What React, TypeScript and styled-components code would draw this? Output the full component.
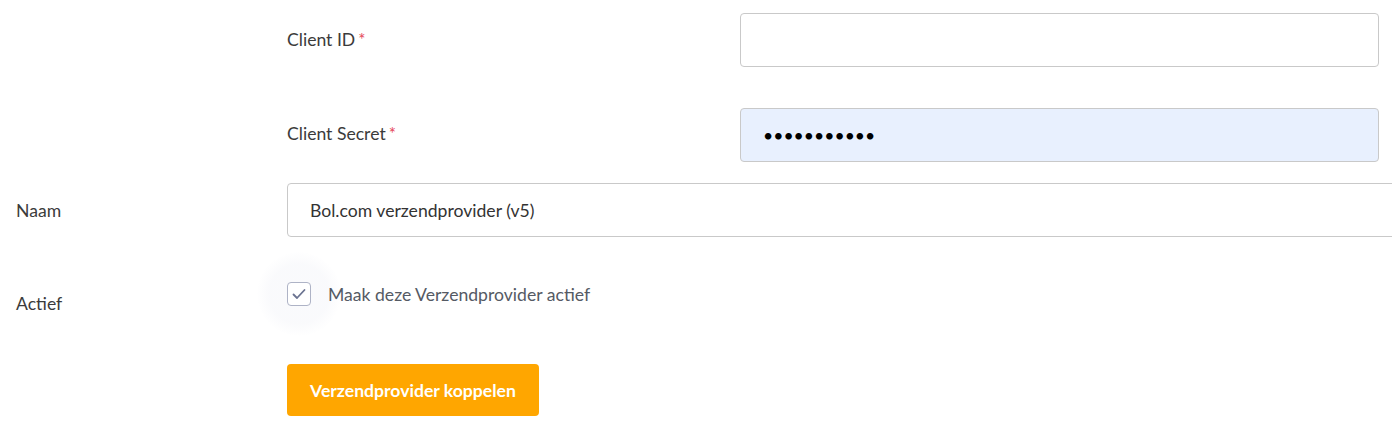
import React from 'react';
import styled, { createGlobalStyle } from 'styled-components';

const Global = createGlobalStyle`
  html, body {
    margin: 0;
    padding: 0;
    background: #fff;
    overflow: hidden;
  }
  body {
    font-family: Lato, 'Open Sans', sans-serif;
    color: #3b3b3b;
  }
`;

const S = {
  Form: styled.form`
    display: flex;
    flex-direction: column;
    width: 1500px;
    padding-top: 13px;
  `,
  Row: styled.div<{ $mt?: number; $labelW: number; $inputW: number }>`
    display: grid;
    grid-template-columns: ${(p) => p.$labelW}px ${(p) => p.$inputW}px;
    align-items: center;
    margin-top: ${(p) => p.$mt ?? 0}px;
  `,
  Nested: styled.div`
    display: flex;
    flex-direction: column;
    margin-left: 287px;
  `,
  Label: styled.label<{ $shift?: number; $indent?: number }>`
    font-size: 17.6px;
    color: #3b3b3b;
    padding-left: ${(p) => p.$indent ?? 0}px;
    transform: translateY(${(p) => p.$shift ?? 0}px);
  `,
  Required: styled.span`
    color: #e5475a;
    margin-left: 3px;
    font-size: 17px;
  `,
  Input: styled.input<{ $filled?: boolean }>`
    box-sizing: border-box;
    width: 100%;
    height: 54px;
    padding: 0 22px;
    border: 1px solid #c9c9c9;
    border-radius: 4px;
    background: ${(p) => (p.$filled ? '#e8f0fe' : '#fff')};
    font-family: Lato, sans-serif;
    font-size: 17.6px;
    color: ${(p) => (p.$filled ? '#000' : '#333')};
    outline: none;
  `,
  CheckRow: styled.div`
    display: flex;
    align-items: center;
    gap: 17px;
    position: relative;
    z-index: 0;
  `,
  CheckBox: styled.span`
    position: relative;
    box-sizing: border-box;
    width: 24px;
    height: 24px;
    border: 1px solid #aeb3c6;
    border-radius: 4px;
    display: flex;
    align-items: center;
    justify-content: center;
    background: #fff;

    &::before {
      content: '';
      position: absolute;
      left: 50%;
      top: 50%;
      width: 84px;
      height: 84px;
      margin: -42px 0 0 -42px;
      border-radius: 50%;
      background: radial-gradient(circle, rgba(130, 140, 190, 0.045) 50%, rgba(130, 140, 190, 0) 72%);
      z-index: -1;
    }
  `,
  CheckText: styled.span`
    font-size: 17.6px;
    color: #555a64;
  `,
  Button: styled.button`
    width: 252px;
    height: 52px;
    border: none;
    border-radius: 4px;
    background: #ffa600;
    color: #fff;
    font-family: Lato, sans-serif;
    font-weight: 700;
    font-size: 17.6px;
    cursor: pointer;
  `,
};

function App() {
  return (
    <>
      <Global />
      <S.Form onSubmit={(e) => e.preventDefault()}>
        <S.Nested>
          <S.Row $labelW={453} $inputW={639}>
            <S.Label $shift={-1}>
              Client ID<S.Required>*</S.Required>
            </S.Label>
            <S.Input type="text" />
          </S.Row>
          <S.Row $mt={41} $labelW={453} $inputW={639}>
            <S.Label $shift={-2}>
              Client Secret<S.Required>*</S.Required>
            </S.Label>
            <S.Input type="password" $filled defaultValue="12345678901" />
          </S.Row>
        </S.Nested>
        <S.Row $mt={21} $labelW={287} $inputW={1130}>
          <S.Label $indent={16}>Naam</S.Label>
          <S.Input type="text" defaultValue="Bol.com verzendprovider (v5)" />
        </S.Row>
        <S.Row $mt={45} $labelW={287} $inputW={600}>
          <S.Label $indent={16} $shift={9}>
            Actief
          </S.Label>
          <S.CheckRow>
            <S.CheckBox>
              <svg width="16" height="16" viewBox="0 0 16 16">
                <path d="M2.5 8.5 L6 12 L13.5 4" fill="none" stroke="#6b7391" strokeWidth="1.8" strokeLinecap="round" strokeLinejoin="round" />
              </svg>
            </S.CheckBox>
            <S.CheckText>Maak deze Verzendprovider actief</S.CheckText>
          </S.CheckRow>
        </S.Row>
        <S.Row $mt={58} $labelW={287} $inputW={252}>
          <span />
          <S.Button type="submit">Verzendprovider koppelen</S.Button>
        </S.Row>
      </S.Form>
    </>
  );
}

export default App;
